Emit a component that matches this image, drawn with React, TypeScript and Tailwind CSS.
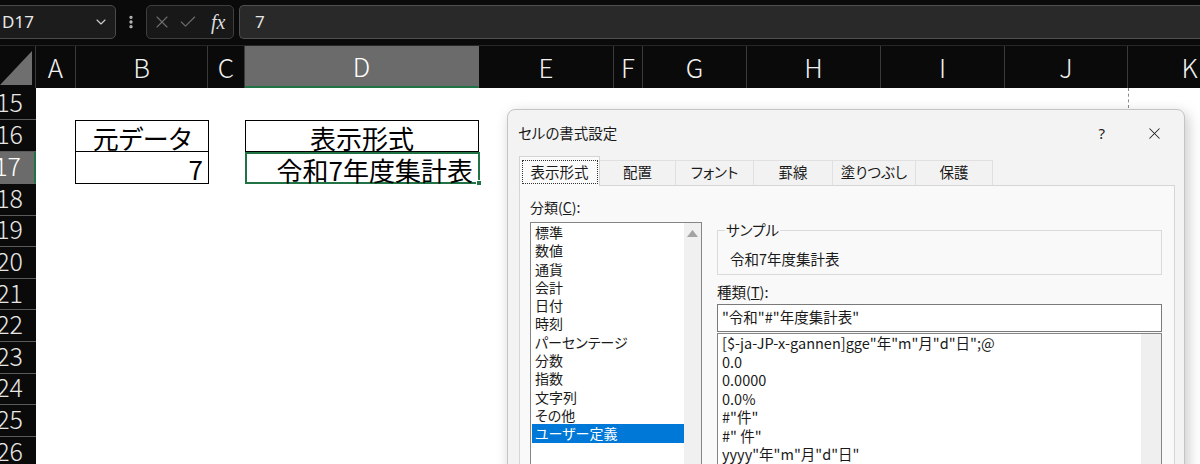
import { ChevronDown, EllipsisVertical, X, Check } from "lucide-react";

const jp = "font-['Noto_Sans_CJK_JP','Noto_Sans',sans-serif] [font-feature-settings:'palt']";

const columns = [
  { label: "A", cls: "w-[40px]" },
  { label: "B", cls: "w-[132px]" },
  { label: "C", cls: "w-[37px]" },
  { label: "D", cls: "w-[234px]", active: true },
  { label: "E", cls: "w-[135px]" },
  { label: "F", cls: "w-[29px]" },
  { label: "G", cls: "w-[104px]" },
  { label: "H", cls: "w-[134px]" },
  { label: "I", cls: "w-[124px]" },
  { label: "J", cls: "w-[123px]" },
  { label: "K", cls: "w-[124px]" },
];

const rows = [
  { n: 15, h: "h-[32px]" },
  { n: 16, h: "h-[32px]" },
  { n: 17, h: "h-[32px]", active: true },
  { n: 18, h: "h-[31.6px]" },
  { n: 19, h: "h-[31.6px]" },
  { n: 20, h: "h-[31.6px]" },
  { n: 21, h: "h-[31.6px]" },
  { n: 22, h: "h-[31.6px]" },
  { n: 23, h: "h-[31.6px]" },
  { n: 24, h: "h-[31.6px]" },
  { n: 25, h: "h-[31.6px]" },
  { n: 26, h: "h-[31.6px]" },
];

const categories = [
  "標準",
  "数値",
  "通貨",
  "会計",
  "日付",
  "時刻",
  "パーセンテージ",
  "分数",
  "指数",
  "文字列",
  "その他",
  "ユーザー定義",
];

const formats = [
  '[$-ja-JP-x-gannen]gge"年"m"月"d"日";@',
  "0.0",
  "0.0000",
  "0.0%",
  '#"件"',
  '#" 件"',
  'yyyy"年"m"月"d"日"',
];

const tabs = ["表示形式", "配置", "フォント", "罫線", "塗りつぶし", "保護"];
const tabWidths = ["w-[81px]", "w-[76px]", "w-[78px]", "w-[79px]", "w-[83px]", "w-[77px]"];

function FormulaBar() {
  return (
    <div className="flex h-[46px] shrink-0 items-start gap-[5px] border-b border-[#262626] bg-[#0a0a0a] pt-[5px]">
      <div className="-ml-[4px] flex h-[34px] w-[120px] items-center justify-between rounded-[5px] border border-[#4a4a4a] bg-[#1c1c1c] pl-[5px] pr-[6px]">
        <span className="text-[17px] text-[#e8e8e8] font-['Noto_Sans',sans-serif]">D17</span>
        <ChevronDown size={16} strokeWidth={1.6} className="text-[#cfcfcf]" />
      </div>
      <div className="flex h-[34px] w-[20px] items-center justify-center">
        <EllipsisVertical size={16} strokeWidth={3} className="text-[#bdbdbd]" />
      </div>
      <div className="flex h-[34px] w-[88px] items-center gap-[6px] rounded-[5px] border border-[#3e3e3e] bg-[#181818] pl-[5px]">
        <X size={20} strokeWidth={1.3} className="text-[#6e6e6e]" />
        <Check size={20} strokeWidth={1.3} className="text-[#6e6e6e]" />
        <span className="ml-[7px] text-[20px] italic text-[#dcdcdc] font-['Liberation_Serif',serif]">fx</span>
      </div>
      <div className="flex h-[34px] flex-1 items-center rounded-l-[5px] border border-r-0 border-[#4f4f4f] bg-[#292929] pl-[15px]">
        <span className="text-[17px] text-[#e4e4e4] font-['Noto_Sans',sans-serif]">7</span>
      </div>
    </div>
  );
}

function ColumnHeaders() {
  return (
    <div className="flex h-[42px] shrink-0 bg-[#0a0a0a] font-['Noto_Sans_CJK_JP',sans-serif] font-light">
      <div className="flex w-[36px] shrink-0 items-end border-r border-[#3a3a3a] pb-[3px]">
        <svg width="32" height="34" viewBox="0 0 32 34">
          <polygon points="32,0 32,34 0,34" fill="#6f6f6f" />
        </svg>
      </div>
      {columns.map((c) => (
        <div
          key={c.label}
          className={`${c.cls} flex shrink-0 items-center justify-center border-r text-[26px] leading-none ${
            c.active
              ? "border-[#6b6b6b] border-b-2 border-b-[#217346] bg-[#6b6b6b] text-white"
              : "border-[#3a3a3a] text-[#f0f0f0]"
          }`}
        >
          {c.label}
        </div>
      ))}
    </div>
  );
}

function RowHeaders() {
  return (
    <div className="flex w-[36px] shrink-0 flex-col overflow-hidden bg-[#0a0a0a] font-['Noto_Sans_CJK_JP',sans-serif] font-light">
      {rows.map((r) => (
        <div
          key={r.n}
          className={`${r.h} flex shrink-0 items-center justify-end overflow-hidden border-b pr-[13px] text-[25px] leading-[26px] ${
            r.active
              ? "border-[#6b6b6b] border-r-2 border-r-[#217346] bg-[#6b6b6b] pr-[11px] text-white"
              : "border-[#5a5a5a] text-[#e6e6e6]"
          }`}
        >
          <span className="-mt-[5px]">{r.n}</span>
        </div>
      ))}
    </div>
  );
}

function Sheet() {
  return (
    <div className={`relative flex flex-1 flex-col bg-white text-[26px] leading-none text-black ${jp}`}>
      <div className="absolute left-[1092px] top-0 h-[20px] border-l border-dashed border-[#8a8a8a]" />
      <div className="h-[32px] shrink-0" />
      <div className="flex h-[32px] shrink-0">
        <div className="w-[39px] shrink-0" />
        <div className="flex w-[134px] shrink-0 items-center justify-center border border-black pt-[4px]">元データ</div>
        <div className="w-[36px] shrink-0" />
        <div className="flex w-[234px] shrink-0 items-center justify-center border border-black pt-[4px]">表示形式</div>
      </div>
      <div className="flex h-[32px] shrink-0">
        <div className="w-[39px] shrink-0" />
        <div className="flex w-[134px] shrink-0 items-center justify-end border-x border-b border-black pr-[5px] pt-[3px]">7</div>
        <div className="w-[36px] shrink-0" />
        <div className="relative flex w-[235px] shrink-0 items-center justify-end border-2 border-[#217346] pr-[5px] pt-[3px]">
          令和7年度集計表
          <div className="absolute -bottom-[4px] -right-[4px] h-[6px] w-[6px] border border-white bg-[#217346]" />
        </div>
      </div>
    </div>
  );
}

function Dialog() {
  return (
    <div
      className={`absolute left-[507px] top-[109px] flex h-[380px] w-[678px] flex-col rounded-t-[8px] border border-[#c4c4c4] bg-[#f3f3f3] text-[#1a1a1a] shadow-[3px_4px_14px_rgba(0,0,0,0.22)] ${jp}`}
    >
      <div className="flex h-[46px] shrink-0 items-center pl-[10px] pr-[20px] text-[14.5px]">
        <span className="flex-1">セルの書式設定</span>
        <span className="mr-[40px] font-['Noto_Sans',sans-serif] text-[15px]">?</span>
        <X size={19} strokeWidth={1.3} className="text-[#222]" />
      </div>
      <div className="flex h-[29px] shrink-0 items-end pl-[11px] text-[14.5px]">
        {tabs.map((t, i) =>
          i === 0 ? (
            <div
              key={t}
              className={`${tabWidths[i]} relative z-10 -mb-px flex h-[30px] items-center justify-center border border-b-0 border-[#d4d4d4] bg-[#fafafa]`}
            >
              <span className="flex h-[24px] w-[76px] items-center justify-center border border-dotted border-[#333]">{t}</span>
            </div>
          ) : (
            <div
              key={t}
              className={`${tabWidths[i]} flex h-[25px] items-center justify-center border border-b-0 border-l-0 border-[#e0e0e0] bg-[#f2f2f2] pb-[2px]`}
            >
              {t}
            </div>
          )
        )}
      </div>
      <div className="ml-[11px] mr-[9px] flex flex-1 gap-[15px] border border-[#d6d6d6] bg-[#f9f9f9] pl-[10px] text-[14px] leading-[18px]">
        <div className="flex w-[172px] flex-col pt-[12px]">
          <div className="h-[18px]">
            分類(<span className="underline">C</span>):
          </div>
          <div className="mt-[6px] flex flex-1 border border-[#858585] bg-white">
            <div className="flex-1 pl-px">
              {categories.map((c) => (
                <div
                  key={c}
                  className={`h-[18.3px] pl-[3px] leading-[18.3px] ${
                    c === "ユーザー定義" ? "bg-[#0078d7] text-white" : ""
                  }`}
                >
                  {c}
                </div>
              ))}
            </div>
            <div className="flex w-[17px] justify-center bg-[#f0f0f0] pt-[7px]">
              <svg width="11" height="7" viewBox="0 0 11 7">
                <polygon points="5.5,0 11,7 0,7" fill="#a3a3a3" />
              </svg>
            </div>
          </div>
        </div>
        <div className="flex w-[445px] flex-col pt-[35px]">
          <fieldset className="h-[54px] border border-[#dadada] pl-[12px]">
            <legend className="ml-[-5px] px-[1px] text-[14.5px] leading-[18px]">サンプル</legend>
            <div className="pt-[11px] text-[14.5px]">令和7年度集計表</div>
          </fieldset>
          <div className="mt-[8px] h-[18px] text-[14.5px]">
            種類(<span className="underline">T</span>):
          </div>
          <div className="mt-[3px] flex h-[28px] items-center border border-[#7a7a7a] bg-white pb-[2px] pl-[4px] text-[14.5px]">
            "令和"#"年度集計表"
          </div>
          <div className="mt-px flex flex-1 border border-[#858585] bg-white">
            <div className="flex-1 pl-[4px] text-[14.5px]">
              {formats.map((f) => (
                <div key={f} className="h-[18.5px] leading-[18.5px]">
                  {f}
                </div>
              ))}
            </div>
            <div className="w-[20px] bg-[#efefef]" />
          </div>
        </div>
      </div>
    </div>
  );
}

export default function App() {
  return (
    <div className="relative flex h-[464px] w-[1200px] flex-col overflow-hidden bg-white">
      <FormulaBar />
      <ColumnHeaders />
      <div className="flex flex-1 overflow-hidden">
        <RowHeaders />
        <Sheet />
      </div>
      <Dialog />
    </div>
  );
}
